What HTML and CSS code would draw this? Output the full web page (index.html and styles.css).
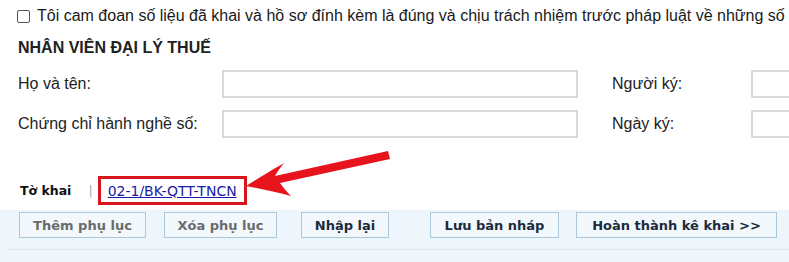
FILE: index.html
```html
<!DOCTYPE html>
<html lang="vi">
<head>
<meta charset="utf-8">
<link rel="stylesheet" href="styles.css">
</head>
<body>
<div class="page">
  <label class="agree"><input type="checkbox" class="agree-box"><span>Tôi cam đoan số liệu đã khai và hồ sơ đính kèm là đúng và chịu trách nhiệm trước pháp luật về những số liệu đã khai</span></label>
  <div class="section-title">NHÂN VIÊN ĐẠI LÝ THUẾ</div>
  <div class="form">
    <div class="form-row">
      <span class="label">Họ và tên:</span>
      <input class="field" type="text">
      <span class="label label-right">Người ký:</span>
      <input class="field field-small" type="text">
    </div>
    <div class="form-row">
      <span class="label">Chứng chỉ hành nghề số:</span>
      <input class="field" type="text">
      <span class="label label-right">Ngày ký:</span>
      <input class="field field-small" type="text">
    </div>
  </div>
  <div class="tokhai">
    <span class="tokhai-label">Tờ khai</span>
    <span class="sep">|</span>
    <span class="highlight"><a href="#" class="tokhai-link">02-1/BK-QTT-TNCN</a></span>
  </div>
  <div class="actions">
    <div class="btn-row">
      <button class="btn btn-disabled btn-w1">Thêm phụ lục</button>
      <button class="btn btn-disabled btn-w2">Xóa phụ lục</button>
      <button class="btn btn-w3">Nhập lại</button>
      <button class="btn btn-w4">Lưu bản nháp</button>
      <button class="btn btn-w5">Hoàn thành kê khai &gt;&gt;</button>
    </div>
    <div class="divider"></div>
  </div>
  <svg class="arrow" width="789" height="262" viewBox="0 0 789 262">
    <path d="M246 186 C262 176 272 170 284 163 C280 168 277 172 275 176 L388 151 L390 159 L280 183 C283 187 286 191 291 196 C276 192 262 189 246 186 Z" fill="#e8141b"/>
  </svg>
</div>
</body>
</html>
```
FILE: styles.css
```css
html, body {
  margin: 0;
  padding: 0;
  background: #ffffff;
}
.page {
  position: relative;
  width: 789px;
  height: 262px;
  overflow: hidden;
  font-family: "Liberation Sans", Arial, sans-serif;
  color: #222;
}
.agree {
  display: flex;
  align-items: center;
  height: 32px;
  padding-left: 17px;
  font-size: 16px;
  white-space: nowrap;
  color: #1a1a1a;
}
.agree-box {
  appearance: none;
  -webkit-appearance: none;
  width: 13px;
  height: 13px;
  margin: 0 7px 0 0;
  border: 1px solid #555;
  border-radius: 2px;
  background: #fff;
  flex: none;
}
.section-title {
  height: 32px;
  line-height: 32px;
  padding-left: 18px;
  font-size: 16px;
  font-weight: bold;
  color: #222;
}
.form {
  display: flex;
  flex-direction: column;
  gap: 12px;
  margin-top: 6px;
  padding-left: 18px;
}
.form-row {
  display: flex;
  align-items: center;
  height: 28px;
}
.label {
  width: 204px;
  flex: none;
  font-size: 16px;
  color: #222;
}
.label-right {
  width: 139px;
  margin-left: 34px;
}
.field {
  width: 356px;
  height: 28px;
  box-sizing: border-box;
  border: 2px solid #d9d9d9;
  background: #fff;
  margin: 0;
  flex: none;
}
.field-small {
  width: 100px;
}
.tokhai {
  display: flex;
  align-items: center;
  height: 29px;
  margin-top: 38px;
  padding-left: 20px;
  font-family: "DejaVu Sans", Verdana, sans-serif;
  font-size: 12.5px;
}
.tokhai-label {
  font-weight: bold;
  color: #111;
}
.sep {
  color: #aaa;
  margin-left: 17px;
  margin-right: 5px;
}
.highlight {
  display: flex;
  align-items: center;
  box-sizing: border-box;
  width: 149px;
  height: 29px;
  border: 3px solid #d8141c;
  padding-left: 7px;
}
.tokhai-link {
  color: #1a1aa6;
  text-decoration: underline;
  font-size: 14px;
  white-space: nowrap;
}
.actions {
  margin-top: 5px;
  height: 52px;
  background: #eef6fb;
  padding-top: 2px;
  box-sizing: border-box;
}
.btn-row {
  display: flex;
  padding-left: 19px;
}
.btn {
  height: 26px;
  box-sizing: border-box;
  border: 1px solid #a9c9da;
  background: #f2f8fc;
  font-family: "DejaVu Sans", Verdana, sans-serif;
  font-size: 13px;
  font-weight: bold;
  color: #1b2b3c;
  padding: 0;
  margin: 0;
}
.btn-disabled {
  color: #6b6b6b;
}
.btn-w1 { width: 127px; }
.btn-w2 { width: 113px; margin-left: 18px; }
.btn-w3 { width: 88px; margin-left: 24px; }
.btn-w4 { width: 129px; margin-left: 41px; }
.btn-w5 { width: 201px; margin-left: 17px; }
.divider {
  margin: 11px 0 0 8px;
  height: 1px;
  background: #d6e7f1;
}
.arrow {
  position: absolute;
  left: 0;
  top: 0;
  pointer-events: none;
}
```
